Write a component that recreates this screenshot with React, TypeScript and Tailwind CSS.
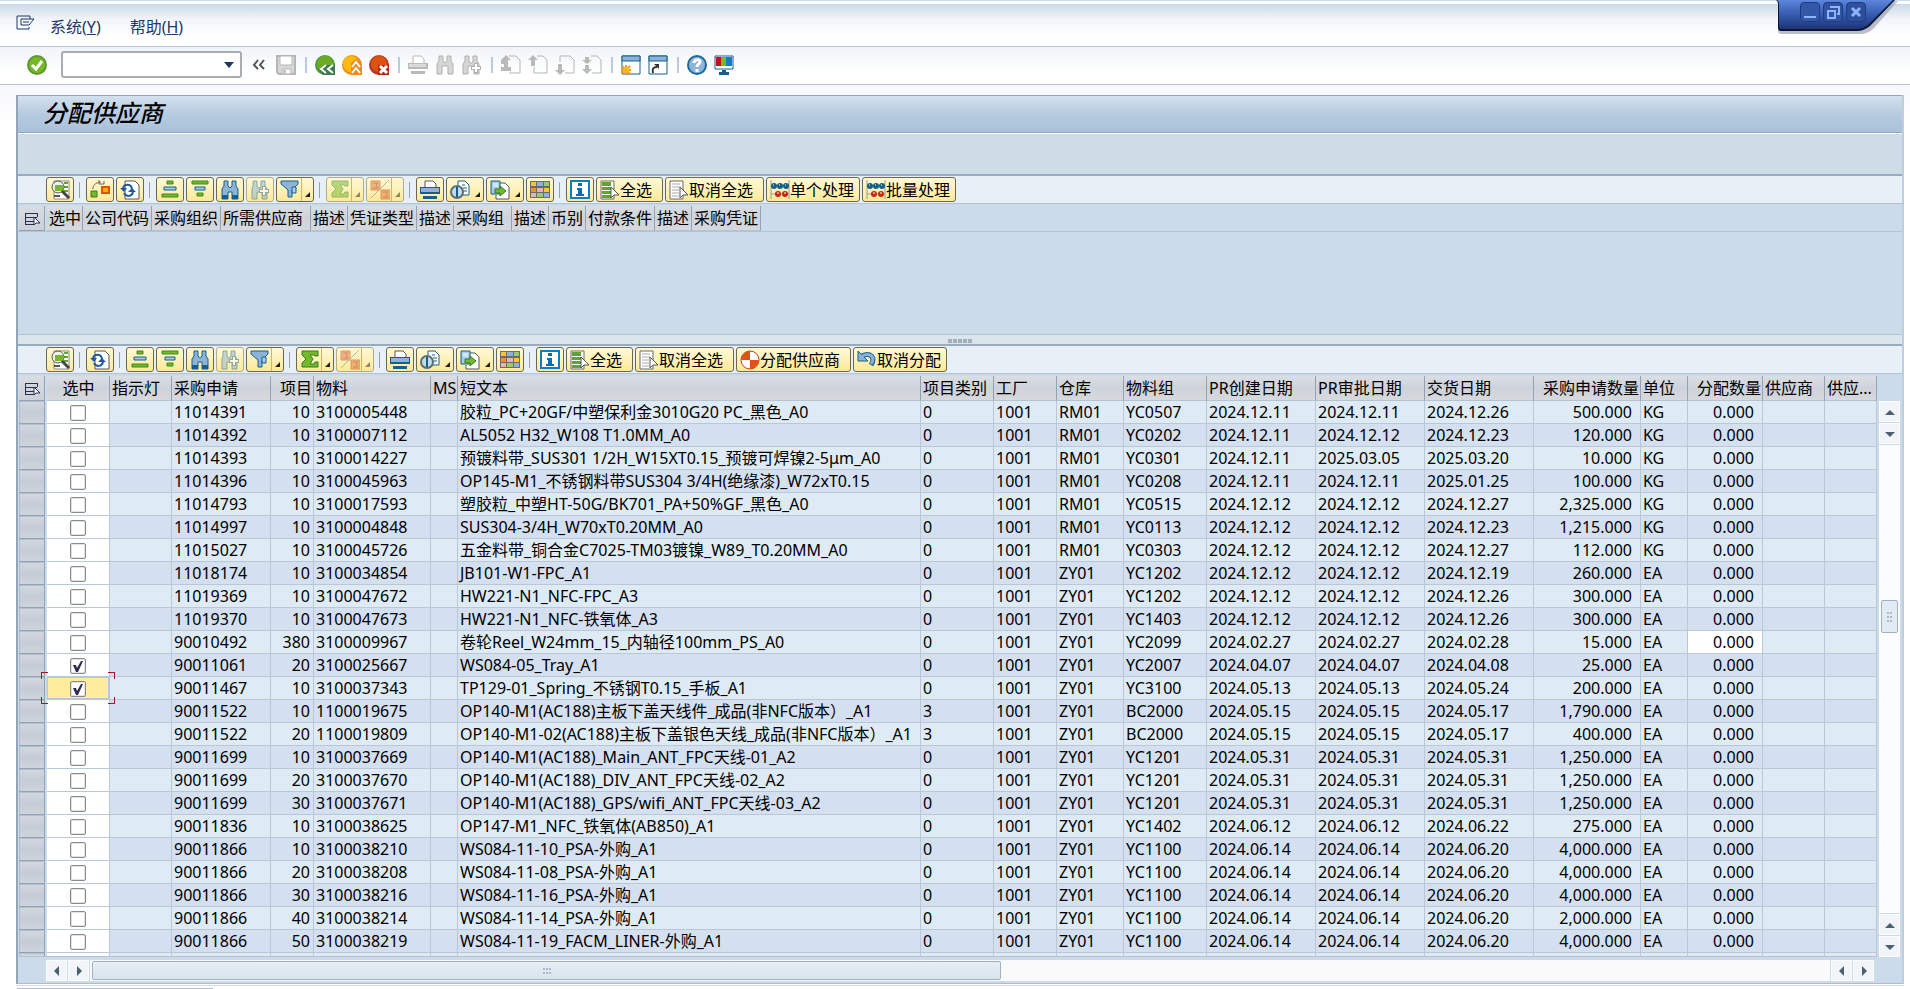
import { useState } from 'react';
import type { ReactNode } from 'react';

interface Requisition {
  pr: string;
  item: string;
  material: string;
  text: string;
  category: string;
  storage: string;
  group: string;
  created: string;
  approved: string;
  delivery: string;
  quantity: string;
  unit: string;
}

type IconName = keyof typeof ICONS;

const ICONS = {
  command: (
    <path
      d="M15 6V3H2v13h12v-2M6 6h13l-5 6H6zM8 9h6"
      fill="none"
      stroke="#1f3864"
    />
  ),
  ok: (
    <>
      <circle cx="10" cy="10" r="10" fill="#5d9732" />
      <circle cx="10" cy="10" r="8" fill="#76b82a" />
      <path d="M5 10l4 4 6-8" fill="none" stroke="#fff" strokeWidth="3" />
    </>
  ),
  collapse: <path d="M9 5L5 10l4 4M15 5l-4 5 4 4" fill="none" stroke="#555" strokeWidth="2" />,
  save: (
    <>
      <path d="M1 1h18v18H3l-2-2z" fill="#d9d9d9" stroke="#b5b5b5" strokeWidth="2" />
      <path d="M4 1h12v9H4z" fill="#fff" stroke="#b5b5b5" />
      <path d="M6 14h9v5H6z" fill="#fff" stroke="#b5b5b5" />
      <path d="M7 15h3v4H7z" fill="#c4c4c4" />
    </>
  ),
  back: (
    <>
      <circle cx="10" cy="10" r="10" fill="#4f9a3a" />
      <circle cx="10" cy="9" r="8" fill="#6cab28" />
      <path d="M8 10h12v10H8l-4-5z" fill="#3d7a50" />
      <path d="M11 10l-5 4 5 4M18 10l-5 4 5 4" fill="none" stroke="#fff" strokeWidth="2" />
    </>
  ),
  up: (
    <>
      <circle cx="10" cy="10" r="10" fill="#ee8d10" />
      <circle cx="9" cy="9" r="8" fill="#fbb911" />
      <path d="M9 8l5-4 6 5v11H9z" fill="#f18a1d" />
      <path d="M10 12l4-5 4 5M10 18l4-5 4 5" fill="none" stroke="#fff" strokeWidth="2" />
    </>
  ),
  cancel: (
    <>
      <circle cx="10" cy="10" r="10" fill="#b83a1e" />
      <circle cx="10" cy="9" r="8" fill="#dc5213" />
      <path d="M9 10h11v10H9z" fill="#b02a12" />
      <path d="M11 11l7 7M18 11l-7 7" fill="none" stroke="#fff" strokeWidth="3" />
    </>
  ),
  printGray: (
    <>
      <path d="M5 8V1h8l3 3v4" fill="#fff" stroke="#b9b9b9" />
      <path d="M0 8h20v6H0z" fill="#b9b9b9" />
      <path d="M1 9h17v3H1z" fill="#dadada" />
      <path d="M3 16h14v3H3z" fill="#b9b9b9" />
    </>
  ),
  findGray: (
    <path
      d="M4 1h4v5l2 2 2-2V1h4v5l2 3v10h-5v-8H7v8H2V9l2-3z"
      fill="#d6d6d6"
      stroke="#b0b0b0"
    />
  ),
  findNextGray: (
    <>
      <path
        d="M3 1h4v5l1 2h2l1-2V1h4v5l2 3v10h-5v-8H6v8H1V9l2-3z"
        fill="#d6d6d6"
        stroke="#b0b0b0"
      />
      <path d="M14 8v10M9 13h10" stroke="#b0b0b0" strokeWidth="4" />
      <path d="M14 9v8M10 13h8" stroke="#fff" strokeWidth="2" />
    </>
  ),
  firstPage: (
    <>
      <path d="M8 1h7l4 4v13H8" fill="none" stroke="#b5b5b5" />
      <path d="M5 0l5 5H7v4h3H7v3h3v4H0v-4h3V9H0V5z" fill="#b9b9b9" />
    </>
  ),
  prevPage: (
    <>
      <path d="M9 1h6l4 4v13H6v-6" fill="none" stroke="#b5b5b5" />
      <path d="M5 0l5 5H7v6H3V5H0z" fill="#b9b9b9" />
    </>
  ),
  nextPage: (
    <>
      <path d="M5 7V1h10l4 4v13h-9" fill="none" stroke="#b5b5b5" />
      <path d="M5 20l-5-5h3V9h4v6h3z" fill="#b9b9b9" />
    </>
  ),
  lastPage: (
    <>
      <path d="M9 1h6l4 4v13h-9" fill="none" stroke="#b5b5b5" />
      <path d="M5 9L0 5h3V2h4v3h3zM5 19l-5-5h3v-4h4v4h3z" fill="#b9b9b9" />
    </>
  ),
  newSession: (
    <>
      <path d="M1 1h18v18H1z" fill="#fff" stroke="#13608c" />
      <path d="M1 1h18v5H1z" fill="#8db4d8" stroke="#13608c" />
      <path d="M5 10v10M0 15h10M1 11l8 8M9 11l-8 8" stroke="#f39a1a" strokeWidth="2" />
      <circle cx="5" cy="15" r="3" fill="#fdb913" />
    </>
  ),
  shortcut: (
    <>
      <path d="M1 1h18v18H1z" fill="#fff" stroke="#13608c" />
      <path d="M1 1h18v5H1z" fill="#8db4d8" stroke="#13608c" />
      <path d="M5 18c-1-4 0-6 4-6" fill="none" stroke="#333" strokeWidth="2" />
      <path d="M6 9h5v5z" fill="#333" />
    </>
  ),
  help: (
    <>
      <circle cx="10" cy="10" r="9" fill="#8fb4d9" stroke="#1c6a9c" strokeWidth="2" />
      <path d="M7 8c0-4 6-4 6-1 0 2-3 2-3 5M10 14v3" fill="none" stroke="#fff" strokeWidth="3" />
    </>
  ),
  monitor: (
    <>
      <path d="M1 1h18v13H1z" fill="#fff" stroke="#13608c" />
      <path d="M2 2h5v9H2z" fill="#c8101a" />
      <path d="M7 2h5v9H7z" fill="#76b82a" />
      <path d="M12 2h6v9h-6z" fill="#0a7fc2" />
      <path d="M8 15h4v2h3v3H5v-3h3z" fill="#13608c" />
    </>
  ),
  details: (
    <>
      <path d="M4 1h15v18H4z" fill="#fff" stroke="#888" />
      <path d="M14 2h4v2h-4zM14 6h4v2h-4zM14 10h4v2h-4z" fill="#62a52b" />
      <path d="M4 15h6v2H4z" fill="#555" />
      <circle cx="8" cy="7" r="6" fill="#eef4ea" stroke="#555" />
      <path d="M5 5h8v6H5z" fill="#76b82a" />
      <path d="M12 11l7 7" stroke="#444" strokeWidth="3" />
    </>
  ),
  convert: (
    <>
      <path d="M1 11h6v6H1z" fill="#76b82a" stroke="#3d7a20" />
      <path d="M12 7h7v6h-7z" fill="#f9b000" stroke="#e35205" strokeWidth="2" />
      <path d="M3 9c0-4 2-6 8-7M9 0v4h5V1" fill="none" stroke="#666" />
    </>
  ),
  refresh: (
    <>
      <path d="M5 1h10l4 4v14H5z" fill="#fff" stroke="#555" />
      <path d="M3 8c1-4 8-5 9 1" fill="none" stroke="#2359a4" strokeWidth="2" />
      <path d="M0 8h7l-3 4zM8 12l4-4 4 4z" fill="#2359a4" />
      <path d="M13 12c-1 5-7 5-9 1" fill="none" stroke="#2359a4" strokeWidth="2" />
    </>
  ),
  sortAsc: (
    <>
      <path d="M7 1h6v3H7zM2 14h16v3H2z" fill="#76b82a" stroke="#3d8a1e" />
      <path d="M4 7h12v3H4z" fill="#a9cbe6" stroke="#13608c" />
    </>
  ),
  sortDesc: (
    <>
      <path d="M2 1h16v3H2zM7 13h6v3H7z" fill="#76b82a" stroke="#3d8a1e" />
      <path d="M5 7h10v3H5z" fill="#a9cbe6" stroke="#13608c" />
    </>
  ),
  find: (
    <>
      <path
        d="M4 1h4v5l2 2 2-2V1h4v5l2 3v10h-6v-7H8v7H2V9l2-3z"
        fill="#8db4d8"
        stroke="#13608c"
      />
      <path d="M2 15h6v4H2zM12 15h6v4h-6z" fill="#13608c" />
    </>
  ),
  findNext: (
    <>
      <path
        d="M3 1h4v5l1 2h2l1-2V1h4v5l2 3v10h-5v-7H7v7H2V9l1-3z"
        fill="#8db4d8"
        stroke="#13608c"
      />
      <path d="M14 6v10M9 11h10" stroke="#2359a4" strokeWidth="4" />
      <path d="M14 7v8M10 11h8" stroke="#fff" strokeWidth="2" />
    </>
  ),
  filter: (
    <>
      <path d="M1 1h17v3l-6 6v7H8v-7L1 4z" fill="#8db4d8" stroke="#13608c" />
      <path d="M12 7h4v6h-4z" fill="#a9cbe6" stroke="#13608c" />
    </>
  ),
  sum: (
    <path
      d="M2 1h16v5h-3l-1-1h-4l3 4-3 5h4l1-2h3v5H2v-4l4-4-4-4z"
      fill="#76b82a"
      stroke="#2f7d2a"
    />
  ),
  subtotal: (
    <>
      <path d="M1 1h9v9H1zM11 10h9v9h-9z" fill="#e9763d" stroke="#c23b12" />
      <path d="M3 3h5L6 5l2 3H3M13 12h5l-2 2 2 3h-5" fill="none" stroke="#8c2a10" />
      <path d="M19 0L1 18" stroke="#777" />
    </>
  ),
  print: (
    <>
      <path d="M5 7V1h8l3 3v3" fill="#fff" stroke="#555" />
      <path d="M0 7h20v7H0z" fill="#13608c" />
      <path d="M1 8h18v4H1z" fill="#8db4d8" />
      <path d="M3 16h14v3H3z" fill="#13608c" />
    </>
  ),
  preview: (
    <>
      <path d="M8 1h7l4 4v10H8z" fill="#fff" stroke="#13608c" />
      <path d="M13 8h4M13 11h4M12 5h3" stroke="#13608c" />
      <circle cx="7" cy="12" r="6" fill="#c4dbea" stroke="#5d6d7a" strokeWidth="2" />
      <path d="M7 7v10" stroke="#13608c" strokeWidth="2" />
    </>
  ),
  exportFile: (
    <>
      <path d="M9 3h6l4 4v12H6v-4" fill="#fff" stroke="#555" />
      <path d="M1 1h9v13H1z" fill="#a9cbe6" stroke="#13608c" />
      <path d="M3 4h5M3 6h5" stroke="#fff" />
      <path d="M5 9h5V6l6 5-6 5v-3H5z" fill="#76b82a" stroke="#2f7d2a" />
    </>
  ),
  layout: (
    <>
      <path d="M0 1h20v17H0z" fill="#6b6b6b" />
      <path d="M1 2h5v4H1zM14 8h5v4h-5z" fill="#fbc62d" />
      <path d="M7 2h6v4H7zM14 13h5v4h-5z" fill="#8db4d8" />
      <path d="M14 2h5v4h-5zM7 13h6v4H7z" fill="#9bc96d" />
      <path d="M1 8h5v4H1z" fill="#ee9022" />
      <path d="M7 8h6v4H7zM1 13h5v4H1z" fill="#e6b4b0" />
    </>
  ),
  info: (
    <>
      <path d="M1 1h18v17H1z" fill="#fff" stroke="#0a7fc2" strokeWidth="2" />
      <path d="M8 3h4v3H8zM7 8h5v6h2v2H6v-2h2v-4H7z" fill="#0a6fb0" />
    </>
  ),
  selectAll: (
    <>
      <path d="M1 1h13v18H1z" fill="#fff" stroke="#6b6b6b" />
      <path d="M2 2h9v4H2zM2 7h9v3H2zM2 11h9v3H2zM2 15h9v3H2z" fill="#62a52b" />
      <path d="M11 7v11l3-3h5z" fill="#fff" stroke="#555" />
    </>
  ),
  deselectAll: (
    <>
      <path d="M1 1h13v18H1z" fill="#fff" stroke="#6b6b6b" />
      <path d="M3 4h8M3 7h8M3 10h7M3 13h7M3 16h7" stroke="#aaa" />
      <path d="M11 7v11l3-3h5z" fill="#fff" stroke="#555" />
    </>
  ),
  abacus: (
    <>
      <path d="M1 0v19M19 0v19M1 6h18M1 14h18" fill="none" stroke="#9a9a9a" />
      <g fill="#13608c">
        <circle cx="4" cy="6" r="3" />
        <circle cx="10" cy="6" r="3" />
        <circle cx="16" cy="6" r="3" />
      </g>
      <g fill="#c8280f">
        <circle cx="8" cy="14" r="3" />
        <circle cx="15" cy="14" r="3" />
      </g>
      <path d="M3 5h1M9 5h1M15 5h1M7 13h2M14 13h2" stroke="#fff" />
    </>
  ),
  assign: (
    <>
      <circle cx="10" cy="10" r="9" fill="#fff" stroke="#c23b12" />
      <path d="M10 10V1a9 9 0 00-9 9zM10 10v9a9 9 0 009-9z" fill="#e0521a" />
    </>
  ),
  undo: (
    <>
      <path d="M5 6c8-4 14 1 9 9" fill="none" stroke="#13608c" strokeWidth="5" />
      <path d="M1 1v10h10z" fill="#8db4d8" stroke="#13608c" />
      <path d="M5 6c8-4 14 1 9 8" fill="none" stroke="#8db4d8" strokeWidth="3" />
    </>
  ),
  selectColumn: (
    <>
      <path d="M15 8V4H3v11h9M3 8h12M3 12h9" fill="none" stroke="#2b2f4a" shapeRendering="crispEdges" />
      <path d="M12 8v8l2-2h4z" fill="#fff" stroke="#2b2f4a" />
    </>
  ),
};

function Icon({ name }: { name: IconName }) {
  return (
    <svg viewBox="0 0 20 20" className="w-5 h-5 shrink-0" aria-hidden="true">
      {ICONS[name]}
    </svg>
  );
}

interface Tool {
  icon: IconName;
  title: string;
  label?: string;
  tight?: boolean;
  menu?: 'split' | 'plain';
  disabled?: boolean;
}

const SORT_TOOLS: Tool[] = [
  { icon: 'sortAsc', title: '升序排序' },
  { icon: 'sortDesc', title: '降序排序' },
  { icon: 'find', title: '查找' },
  { icon: 'findNext', title: '查找下一个', disabled: true },
  { icon: 'filter', title: '过滤器', menu: 'split' },
];

const OUTPUT_TOOLS: Tool[] = [
  { icon: 'print', title: '打印' },
  { icon: 'preview', title: '视图', menu: 'plain' },
  { icon: 'exportFile', title: '导出', menu: 'plain' },
  { icon: 'layout', title: '布局' },
];

const HEADER_TOOLS: Tool[][] = [
  [{ icon: 'details', title: '明细' }],
  [
    { icon: 'convert', title: '转换' },
    { icon: 'refresh', title: '刷新' },
  ],
  SORT_TOOLS,
  [
    { icon: 'sum', title: '总计', menu: 'split', disabled: true },
    { icon: 'subtotal', title: '小计', menu: 'split', disabled: true },
  ],
  OUTPUT_TOOLS,
  [
    { icon: 'info', title: '信息' },
    { icon: 'selectAll', title: '全选', label: '全选' },
    { icon: 'deselectAll', title: '取消全选', label: '取消全选' },
    { icon: 'abacus', title: '单个处理', label: '单个处理', tight: true },
    { icon: 'abacus', title: '批量处理', label: '批量处理', tight: true },
  ],
];

const ITEM_TOOLS: Tool[][] = [
  [{ icon: 'details', title: '明细' }],
  [{ icon: 'refresh', title: '刷新' }],
  SORT_TOOLS,
  [
    { icon: 'sum', title: '总计', menu: 'split' },
    { icon: 'subtotal', title: '小计', menu: 'split', disabled: true },
  ],
  OUTPUT_TOOLS,
  [
    { icon: 'info', title: '信息' },
    { icon: 'selectAll', title: '全选', label: '全选' },
    { icon: 'deselectAll', title: '取消全选', label: '取消全选' },
    { icon: 'assign', title: '分配供应商', label: '分配供应商' },
    { icon: 'undo', title: '取消分配', label: '取消分配', tight: true },
  ],
];

const MAIN_TOOLS: [IconName, string][][] = [
  [
    ['collapse', '收起'],
    ['save', '保存'],
  ],
  [
    ['back', '返回'],
    ['up', '退出'],
    ['cancel', '取消'],
  ],
  [
    ['printGray', '打印'],
    ['findGray', '查找'],
    ['findNextGray', '查找下一个'],
  ],
  [
    ['firstPage', '第一页'],
    ['prevPage', '上一页'],
    ['nextPage', '下一页'],
    ['lastPage', '最后一页'],
  ],
  [
    ['newSession', '新建会话'],
    ['shortcut', '创建快捷方式'],
  ],
  [
    ['help', '帮助'],
    ['monitor', '自定义本地布局'],
  ],
];

const HEADER_COLUMNS = [
  { label: '选中', width: 'w-9' },
  { label: '公司代码', width: 'w-[69px]' },
  { label: '采购组织', width: 'w-[69px]' },
  { label: '所需供应商', width: 'w-[90px]' },
  { label: '描述', width: 'w-[37px]' },
  { label: '凭证类型', width: 'w-[69px]' },
  { label: '描述', width: 'w-[37px]' },
  { label: '采购组', width: 'w-[58px]' },
  { label: '描述', width: 'w-[37px]' },
  { label: '币别', width: 'w-[37px]' },
  { label: '付款条件', width: 'w-[69px]' },
  { label: '描述', width: 'w-[37px]' },
  { label: '采购凭证', width: 'w-[69px]' },
];

const ITEM_COLUMNS = [
  { label: '选中', width: 'w-[63px]', align: 'text-center' },
  { label: '指示灯', width: 'w-[62px]', align: 'text-left' },
  { label: '采购申请', width: 'w-[99px]', align: 'text-left' },
  { label: '项目', width: 'w-[43px]', align: 'text-right' },
  { label: '物料', width: 'w-[117px]', align: 'text-left' },
  { label: 'MS', width: 'w-[27px]', align: 'text-left' },
  { label: '短文本', width: '', align: 'text-left' },
  { label: '项目类别', width: 'w-[73px]', align: 'text-left' },
  { label: '工厂', width: 'w-[63px]', align: 'text-left' },
  { label: '仓库', width: 'w-[67px]', align: 'text-left' },
  { label: '物料组', width: 'w-[83px]', align: 'text-left' },
  { label: 'PR创建日期', width: 'w-[109px]', align: 'text-left' },
  { label: 'PR审批日期', width: 'w-[109px]', align: 'text-left' },
  { label: '交货日期', width: 'w-[109px]', align: 'text-left' },
  { label: '采购申请数量', width: 'w-[107px]', align: 'text-right' },
  { label: '单位', width: 'w-[47px]', align: 'text-left' },
  { label: '分配数量', width: 'w-[75px]', align: 'text-right' },
  { label: '供应商', width: 'w-[62px]', align: 'text-left' },
  { label: '供应...', width: 'w-[52px]', align: 'text-left' },
];

function row(line: string): Requisition {
  const [pr, item, material, text, category, storage, group, created, approved, delivery, quantity, unit] =
    line.split('|');
  return { pr, item, material, text, category, storage, group, created, approved, delivery, quantity, unit };
}

const ROWS: Requisition[] = [
  '11014391|10|3100005448|胶粒_PC+20GF/中塑保利金3010G20 PC_黑色_A0|0|RM01|YC0507|2024.12.11|2024.12.11|2024.12.26|500.000|KG',
  '11014392|10|3100007112|AL5052 H32_W108 T1.0MM_A0|0|RM01|YC0202|2024.12.11|2024.12.12|2024.12.23|120.000|KG',
  '11014393|10|3100014227|预镀料带_SUS301 1/2H_W15XT0.15_预镀可焊镍2-5μm_A0|0|RM01|YC0301|2024.12.11|2025.03.05|2025.03.20|10.000|KG',
  '11014396|10|3100045963|OP145-M1_不锈钢料带SUS304 3/4H(绝缘漆)_W72xT0.15|0|RM01|YC0208|2024.12.11|2024.12.11|2025.01.25|100.000|KG',
  '11014793|10|3100017593|塑胶粒_中塑HT-50G/BK701_PA+50%GF_黑色_A0|0|RM01|YC0515|2024.12.12|2024.12.12|2024.12.27|2,325.000|KG',
  '11014997|10|3100004848|SUS304-3/4H_W70xT0.20MM_A0|0|RM01|YC0113|2024.12.12|2024.12.12|2024.12.23|1,215.000|KG',
  '11015027|10|3100045726|五金料带_铜合金C7025-TM03镀镍_W89_T0.20MM_A0|0|RM01|YC0303|2024.12.12|2024.12.12|2024.12.27|112.000|KG',
  '11018174|10|3100034854|JB101-W1-FPC_A1|0|ZY01|YC1202|2024.12.12|2024.12.12|2024.12.19|260.000|EA',
  '11019369|10|3100047672|HW221-N1_NFC-FPC_A3|0|ZY01|YC1202|2024.12.12|2024.12.12|2024.12.26|300.000|EA',
  '11019370|10|3100047673|HW221-N1_NFC-铁氧体_A3|0|ZY01|YC1403|2024.12.12|2024.12.12|2024.12.26|300.000|EA',
  '90010492|380|3100009967|卷轮Reel_W24mm_15_内轴径100mm_PS_A0|0|ZY01|YC2099|2024.02.27|2024.02.27|2024.02.28|15.000|EA',
  '90011061|20|3100025667|WS084-05_Tray_A1|0|ZY01|YC2007|2024.04.07|2024.04.07|2024.04.08|25.000|EA',
  '90011467|10|3100037343|TP129-01_Spring_不锈钢T0.15_手板_A1|0|ZY01|YC3100|2024.05.13|2024.05.13|2024.05.24|200.000|EA',
  '90011522|10|1100019675|OP140-M1(AC188)主板下盖天线件_成品(非NFC版本）_A1|3|ZY01|BC2000|2024.05.15|2024.05.15|2024.05.17|1,790.000|EA',
  '90011522|20|1100019809|OP140-M1-02(AC188)主板下盖银色天线_成品(非NFC版本）_A1|3|ZY01|BC2000|2024.05.15|2024.05.15|2024.05.17|400.000|EA',
  '90011699|10|3100037669|OP140-M1(AC188)_Main_ANT_FPC天线-01_A2|0|ZY01|YC1201|2024.05.31|2024.05.31|2024.05.31|1,250.000|EA',
  '90011699|20|3100037670|OP140-M1(AC188)_DIV_ANT_FPC天线-02_A2|0|ZY01|YC1201|2024.05.31|2024.05.31|2024.05.31|1,250.000|EA',
  '90011699|30|3100037671|OP140-M1(AC188)_GPS/wifi_ANT_FPC天线-03_A2|0|ZY01|YC1201|2024.05.31|2024.05.31|2024.05.31|1,250.000|EA',
  '90011836|10|3100038625|OP147-M1_NFC_铁氧体(AB850)_A1|0|ZY01|YC1402|2024.06.12|2024.06.12|2024.06.22|275.000|EA',
  '90011866|10|3100038210|WS084-11-10_PSA-外购_A1|0|ZY01|YC1100|2024.06.14|2024.06.14|2024.06.20|4,000.000|EA',
  '90011866|20|3100038208|WS084-11-08_PSA-外购_A1|0|ZY01|YC1100|2024.06.14|2024.06.14|2024.06.20|4,000.000|EA',
  '90011866|30|3100038216|WS084-11-16_PSA-外购_A1|0|ZY01|YC1100|2024.06.14|2024.06.14|2024.06.20|4,000.000|EA',
  '90011866|40|3100038214|WS084-11-14_PSA-外购_A1|0|ZY01|YC1100|2024.06.14|2024.06.14|2024.06.20|2,000.000|EA',
  '90011866|50|3100038219|WS084-11-19_FACM_LINER-外购_A1|0|ZY01|YC1100|2024.06.14|2024.06.14|2024.06.20|4,000.000|EA',
].map(row);

const FOCUSED_ROW = 12;
const EDITABLE_ROW = 10;

function ToolButton({ icon, title, label, tight, menu, disabled }: Tool) {
  return (
    <button
      title={title}
      disabled={disabled}
      className={`relative flex items-center h-[25px] pl-[3px] rounded-[3px] border bg-linear-to-b
        from-[#fff9d6] to-[#fce998] text-black whitespace-nowrap
        ${disabled ? 'border-[#b4ac86]' : 'border-[#6d674c]'}
        ${label ? (tight ? 'pr-[5px]' : 'pr-2.5') : ''}
        ${!label && (menu ? 'w-[38px]' : 'w-7')}`}
    >
      <span className={`flex ${disabled ? 'opacity-50' : ''}`}>
        <Icon name={icon} />
      </span>
      {label}
      {menu === 'split' && (
        <span className="absolute inset-y-0 right-[11px] border-l border-[#cbb765]" />
      )}
      {menu && (
        <svg
          viewBox="0 0 5 5"
          className={`absolute bottom-1 right-[3px] w-[5px] h-[5px] ${disabled ? 'opacity-50' : ''}`}
          aria-hidden="true"
        >
          <path d="M5 0v5H0z" fill="#222" />
        </svg>
      )}
    </button>
  );
}

function GridToolbar({ groups }: { groups: Tool[][] }) {
  return (
    <div className="border-t-2 border-t-[#9aabbd] border-b border-b-[#b4c3d2] bg-[#e7eff7]">
      <div className="flex items-center h-[27px] pl-7 gap-[5px]">
        {groups.map((tools, i) => (
          <div key={i} className="flex items-center gap-[5px]">
            {i > 0 && (
              <span className="flex w-0.5">
                <span className="w-px h-4 bg-[#98a0a8]" />
              </span>
            )}
            <div className="flex gap-0.5">
              {tools.map((tool) => (
                <ToolButton key={tool.title} {...tool} />
              ))}
            </div>
          </div>
        ))}
      </div>
    </div>
  );
}

function Arrow({ direction }: { direction: 'up' | 'down' | 'left' | 'right' }) {
  const paths = {
    up: 'M0 8L5 3l5 5z',
    down: 'M0 3l5 5 5-5z',
    left: 'M7 0v10L2 5z',
    right: 'M3 0v10l5-5z',
  };
  return (
    <svg viewBox="0 0 10 10" className="w-2.5 h-2.5" aria-hidden="true">
      <path d={paths[direction]} fill="#4a5f70" />
    </svg>
  );
}

function ScrollButton({ direction, title }: { direction: 'up' | 'down' | 'left' | 'right'; title: string }) {
  return (
    <button
      title={title}
      className="flex items-center justify-center w-[21px] h-[21px] shrink-0 bg-[#f1f5fa]
                 border border-[#fafcfe]"
    >
      <Arrow direction={direction} />
    </button>
  );
}

function Dots({ rows, cols }: { rows: number; cols: number }) {
  return (
    <span className="flex flex-col gap-0.5">
      {Array.from({ length: rows }, (_, r) => (
        <span key={r} className="flex gap-px">
          {Array.from({ length: cols }, (_, c) => (
            <span key={c} className="w-0.5 h-0.5 bg-[#adb9c5]" />
          ))}
        </span>
      ))}
    </span>
  );
}

function HeadCell({ children, align = 'text-left', width = '' }: { children: ReactNode; align?: string; width?: string }) {
  return (
    <th
      className={`${width} ${align} h-[25px] pl-0.5 pr-px border-r border-r-[#93a3b3] border-b
        border-b-[#b4c3d2] bg-linear-to-b from-[#dbdfe4] via-[#ced2da] to-[#d6dade] font-normal
        whitespace-nowrap overflow-hidden`}
    >
      {children}
    </th>
  );
}

function SelectorHead() {
  return (
    <th className="w-7 h-[25px] p-0 border-r-2 border-[#ccdbe9] bg-linear-to-b from-[#d8dde3] to-[#cbd0d9] shadow-[inset_-1px_-1px_0_#93a3b5]">
      <button title="全选" className="flex w-full justify-center">
        <Icon name="selectColumn" />
      </button>
    </th>
  );
}

function Checkbox({ checked, onChange, label }: { checked: boolean; onChange: () => void; label: string }) {
  return (
    <span className="relative block w-4 h-4 mx-auto mt-1">
      <input
        type="checkbox"
        aria-label={label}
        checked={checked}
        onChange={onChange}
        className="block appearance-none w-4 h-4 rounded-[2px] border border-[#8b8b8b] bg-white
                   shadow-[inset_0_0_0_1px_#e2e2e2]"
      />
      {checked && (
        <svg viewBox="0 0 16 16" className="absolute inset-0 pointer-events-none" aria-hidden="true">
          <path d="M3 7h3l1 3 4-7h2L8 14H6z" fill="#2b2b4a" />
        </svg>
      )}
    </span>
  );
}

function FocusFrame() {
  return (
    <span className="absolute -inset-x-[6px] -inset-y-[5px] z-10 pointer-events-none">
      <span className="absolute left-0 top-0 w-[7px] h-[7px] border-l border-t border-[#b01020]" />
      <span className="absolute right-0 top-0 w-[7px] h-[7px] border-r border-t border-[#b01020]" />
      <span className="absolute left-0 bottom-0 w-[7px] h-[7px] border-l border-b border-[#b01020]" />
      <span className="absolute right-0 bottom-0 w-[7px] h-[7px] border-r border-b border-[#b01020]" />
    </span>
  );
}

const SELECTOR_CELL =
  'h-[23px] p-0 border-r-2 border-[#ccdbe9] bg-linear-to-b from-[#d3d8e0] via-[#c6ccd6] to-[#cfd5dd] shadow-[inset_-1px_-1px_0_#93a3b5,inset_1px_1px_0_#b3bfcc]';
const CELL = 'h-[23px] p-0 pl-0.5 border-r border-b border-[#b9c7d6] whitespace-nowrap overflow-hidden';

function ItemGrid() {
  const [selected, setSelected] = useState<number[]>([11, 12]);

  const toggle = (index: number) => {
    setSelected((prev) => (prev.includes(index) ? prev.filter((i) => i !== index) : [...prev, index]));
  };

  return (
    <table className="w-full table-fixed border-separate border-spacing-0 leading-[20px]">
      <thead>
        <tr>
          <SelectorHead />
          {ITEM_COLUMNS.map((col) => (
            <HeadCell key={col.label} width={col.width} align={col.align}>
              {col.label}
            </HeadCell>
          ))}
        </tr>
      </thead>
      <tbody>
        {ROWS.map((item, index) => (
          <tr key={item.material} className="odd:bg-[#deebf5] even:bg-[#d4dff0]">
            <td className={SELECTOR_CELL} />
            <td
              className={`relative h-[23px] p-0 border-r border-b border-[#b9c7d6] align-top ${
                index === FOCUSED_ROW
                  ? 'bg-[#ffec9c] shadow-[inset_0_0_0_1px_#b9c7d6]'
                  : 'bg-white'
              }`}
            >
              <Checkbox
                checked={selected.includes(index)}
                onChange={() => toggle(index)}
                label={`选中 ${item.pr} ${item.item}`}
              />
              {index === FOCUSED_ROW && <FocusFrame />}
            </td>
            <td className={CELL} />
            <td className={CELL}>{item.pr}</td>
            <td className={`${CELL} text-right pr-[3px]`}>{item.item}</td>
            <td className={CELL}>{item.material}</td>
            <td className={CELL} />
            <td className={CELL}>{item.text}</td>
            <td className={CELL}>{item.category}</td>
            <td className={CELL}>1001</td>
            <td className={CELL}>{item.storage}</td>
            <td className={CELL}>{item.group}</td>
            <td className={CELL}>{item.created}</td>
            <td className={CELL}>{item.approved}</td>
            <td className={CELL}>{item.delivery}</td>
            <td className={`${CELL} text-right pr-2`}>{item.quantity}</td>
            <td className={CELL}>{item.unit}</td>
            <td className={`${CELL} text-right pr-2 ${index === EDITABLE_ROW ? 'bg-white' : ''}`}>
              {index === EDITABLE_ROW ? (
                <input
                  aria-label="分配数量"
                  defaultValue="0.000"
                  className="block w-full h-[20px] text-right bg-white outline-none"
                />
              ) : (
                '0.000'
              )}
            </td>
            <td className={CELL} />
            <td className={CELL} />
          </tr>
        ))}
        <tr className="bg-[#deebf5]">
          <td className={SELECTOR_CELL} />
          <td className={`${CELL} bg-white`} />
          {ITEM_COLUMNS.slice(1).map((col) => (
            <td key={col.label} className={CELL} />
          ))}
        </tr>
      </tbody>
    </table>
  );
}

function WindowControls() {
  return (
    <div className="absolute top-0 right-3 w-[122px] h-9">
      <svg viewBox="0 0 122 36" className="absolute inset-0 w-full h-full" aria-hidden="true">
        <defs>
          <linearGradient id="tab" x1="0" y1="0" x2="0" y2="1">
            <stop offset="0" stopColor="#5d86dc" />
            <stop offset="0.45" stopColor="#3a5fb4" />
            <stop offset="1" stopColor="#1b3478" />
          </linearGradient>
        </defs>
        <path d="M2 4v27q0 3 4 3h78q8 0 14-6l24-27z" fill="#8e96a8" opacity="0.6" />
        <path d="M0 0q2 1 2 4v24q0 3 3 3h76q7 0 13-5L119 0z" fill="#0c1433" />
        <path d="M1 0q2 1 2 4v23q0 2 2 2h76q7 0 12-5L117 0z" fill="url(#tab)" />
      </svg>
      <div className="relative flex gap-[3px] pl-6 pt-0.5">
        <button title="最小化" className="w-5 h-5 rounded-sm border border-[#1d3b86] bg-[#3458a8]">
          <svg viewBox="0 0 18 18" aria-hidden="true">
            <path d="M3 13h12v2H3z" fill="#8fb4ff" />
          </svg>
        </button>
        <button title="还原" className="w-5 h-5 rounded-sm border border-[#1d3b86] bg-[#3053a2]">
          <svg viewBox="0 0 18 18" aria-hidden="true">
            <path d="M7 5V4h8v7h-2M4 8h7v7H4z" fill="none" stroke="#8fb4ff" strokeWidth="2" />
          </svg>
        </button>
        <button title="关闭" className="w-5 h-5 rounded-sm border border-[#1d3b86] bg-[#2d4f9c]">
          <svg viewBox="0 0 18 18" aria-hidden="true">
            <path d="M5 5l8 8M13 5l-8 8" stroke="#8fb4ff" strokeWidth="3" />
          </svg>
        </button>
      </div>
    </div>
  );
}

export default function App() {
  return (
    <div
      className="relative flex flex-col h-screen overflow-hidden bg-white text-base text-black
                 font-['Noto_Sans','Noto_Sans_CJK_SC',sans-serif]"
    >
      <div className="h-1 shrink-0 border-t border-[#cfdcf0] bg-white" />

      <nav
        className="flex items-center h-[43px] shrink-0 pl-[15px] border-b border-[#bcc5d6] bg-linear-to-b
                   from-[#ccd8e9] from-0% via-[#f1f4f9] via-35% to-white to-75% text-[#1f3864]"
      >
        <button title="菜单" className="mb-1">
          <Icon name="command" />
        </button>
        <button className="ml-[15px] mt-1">
          系统(<u>Y</u>)
        </button>
        <button className="ml-[29px] mt-1">
          帮助(<u>H</u>)
        </button>
      </nav>

      <div
        className="flex items-center h-[38px] shrink-0 pl-[27px] pb-0.5 gap-[7px] border-b border-[#bcc5d6]
                   bg-linear-to-b from-[#f0f4f8] to-white to-70%"
      >
        <button title="确定">
          <Icon name="ok" />
        </button>
        <div className="flex items-center w-[181px] h-[27px] ml-[7px] border-2 border-[#a9adb2] rounded-[3px] bg-white">
          <input aria-label="命令" className="flex-1 min-w-0 h-full px-1 outline-none" />
          <button title="命令历史" className="px-1.5">
            <svg viewBox="0 0 10 6" className="w-2.5 h-1.5" aria-hidden="true">
              <path d="M0 0h10L5 6z" fill="#1f3864" />
            </svg>
          </button>
        </div>
        {MAIN_TOOLS.map((tools, i) => (
          <div key={i} className="flex items-center gap-[7px]">
            {i > 0 && (
              <span className="flex justify-center w-[5px]">
                <span className="w-0.5 h-4 bg-[#b7cbe2]" />
              </span>
            )}
            {tools.map(([icon, title]) => (
              <button key={icon} title={title}>
                <Icon name={icon} />
              </button>
            ))}
          </div>
        ))}
      </div>

      <main
        className="flex flex-col flex-1 min-h-0 pt-2.5 pl-4 pr-1.5 bg-linear-to-b
                   from-[#f7f8fb] to-white to-5%"
      >
        <div className="flex flex-col flex-1 min-h-0 border-x-2 border-l-[#93a5b7] border-r-[#c0cddb] border-b border-b-[#aebccb] bg-[#ccdbe9]">
          <header
            className="flex items-center h-[38px] shrink-0 pl-[25px] pb-0.5 border-y border-[#93a5b7] bg-linear-to-b
                       from-[#d3e1ee] via-[#b7cbdf] via-50% to-[#a9c1da]"
          >
            <h1 className="text-2xl leading-none font-medium italic">分配供应商</h1>
          </header>
          <div className="h-[41px] shrink-0 border-t border-white bg-[#cedce7]" />

          <section className="flex flex-col h-40 shrink-0">
            <GridToolbar groups={HEADER_TOOLS} />
            <div className="mt-0.5 pl-px border-b border-[#b4c3d2]">
              <table className="table-fixed border-separate border-spacing-0 w-[742px] leading-[20px]">
                <thead>
                  <tr>
                    <SelectorHead />
                    {HEADER_COLUMNS.map((col, i) => (
                      <HeadCell key={i} width={col.width}>
                        {col.label}
                      </HeadCell>
                    ))}
                  </tr>
                </thead>
              </table>
            </div>
          </section>

          <div className="flex items-center justify-center h-2.5 shrink-0 gap-px pt-0.5 border-t border-[#b4c3d2] bg-[#dae5ec]">
            {[0, 1, 2, 3, 4].map((i) => (
              <span key={i} className="w-1 h-1 bg-[#a2afbc]" />
            ))}
          </div>

          <section className="flex flex-col flex-1 min-h-0">
            <GridToolbar groups={ITEM_TOOLS} />
            <div className="flex flex-1 min-h-0 mt-0.5 pl-px pr-px">
              <div className="flex-1 min-w-0 overflow-hidden border-b border-[#b4c3d2]">
                <ItemGrid />
              </div>
              <div className="flex flex-col w-[21px] ml-0.5 mr-px mt-[25px] gap-px">
                <ScrollButton direction="up" title="向上滚动" />
                <ScrollButton direction="down" title="向下滚动" />
                <div className="flex-1 flex flex-col px-0.5 bg-[#fbfcfd]">
                  <div className="grow-[155]" />
                  <div className="flex items-center justify-center h-[33px] border border-[#9fb2c4] rounded-[2px] bg-[#e2ebf4]">
                    <Dots rows={3} cols={2} />
                  </div>
                  <div className="grow-[280]" />
                </div>
                <ScrollButton direction="up" title="上一行" />
                <ScrollButton direction="down" title="下一行" />
              </div>
            </div>
            <div className="flex shrink-0 h-[21px] mt-[3px] mb-0.5 pl-7 pr-7 gap-px">
              <ScrollButton direction="left" title="向左滚动" />
              <ScrollButton direction="right" title="向右滚动" />
              <div className="flex flex-1 p-px pl-0.5 bg-[#fafafa]">
                <div
                  className="flex items-center justify-center basis-0 grow-[523] h-[19px] border border-[#9fb2c4]
                             rounded-[2px] bg-linear-to-b from-[#e6eef6] to-[#d8e4ee]"
                >
                  <Dots rows={2} cols={3} />
                </div>
                <div className="basis-0 grow-[477]" />
              </div>
              <ScrollButton direction="left" title="上一列" />
              <ScrollButton direction="right" title="下一列" />
            </div>
          </section>
        </div>
        <footer className="flex flex-col justify-between h-1 mt-px shrink-0 border-t border-[#d5dbe6]">
          <span className="w-[196px] h-px mt-auto ml-px bg-[#aebccb]" />
        </footer>
      </main>

      <WindowControls />
    </div>
  );
}
